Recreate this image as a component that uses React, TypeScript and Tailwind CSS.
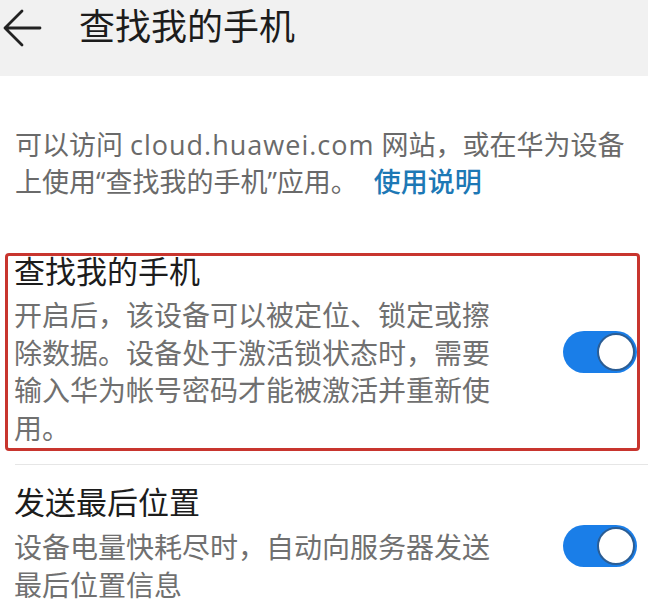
import React from "react";

const font = { fontFamily: '"Open Sans", "Noto Sans CJK SC", sans-serif' };

function Toggle() {
  return (
    <div className="w-[74px] h-[42px] rounded-full bg-[#1a7ee8] flex items-center justify-end p-[2px] shrink-0">
      <div className="w-[38px] h-[38px] rounded-full bg-white border-[2.5px] border-[#2b5d94]" />
    </div>
  );
}

export default function App() {
  return (
    <div className="w-[648px] h-[611px] bg-white overflow-hidden" style={font}>
      {/* header */}
      <div className="h-[76px] bg-[#f1f1f1] flex items-start pt-[7px] pl-[2px]">
        <svg width="40" height="38" viewBox="0 0 40 38" className="mt-[2px]" fill="none">
          <path
            d="M38 19 H3 M20 2 L3 19 L20 36"
            stroke="#222"
            strokeWidth="2.8"
            strokeLinecap="round"
            strokeLinejoin="round"
          />
        </svg>
        <h1 className="ml-[37px] text-[36px] leading-[40px] text-[#1c1c1c]">查找我的手机</h1>
      </div>

      {/* intro */}
      <p className="mt-[50px] pl-[15px] pr-[20px] text-[27px] leading-[37px] text-[#6a6a6a]">
        可以访问 <span className="tracking-[1px]">cloud.huawei.com</span> 网站，或在华为设备上使用“查找我的手机”应用。
        <span className="ml-[16px] text-[#1d78b5] font-medium">使用说明</span>
      </p>

      {/* highlighted item */}
      <div className="mt-[53px] ml-[5px] mr-[8px] border-[3px] border-[#c8352e] rounded-[4px] flex items-center pl-[6px] pb-[1px]">
        <div className="w-[490px]">
          <div className="text-[31px] leading-[30px] text-[#1c1c1c]">查找我的手机</div>
          <div className="mt-[11px] text-[28px] leading-[37.5px] text-[#707070]">
            开启后，该设备可以被定位、锁定或擦除数据。设备处于激活锁状态时，需要输入华为帐号密码才能被激活并重新使用。
          </div>
        </div>
        <div className="ml-auto">
          <Toggle />
        </div>
      </div>

      {/* divider */}
      <div className="mt-[13px] ml-[15px] h-px bg-[#e6e6e6]" />

      {/* second item */}
      <div className="flex items-center pl-[14px] pr-[11px] pt-[22px]">
        <div className="w-[490px]">
          <div className="text-[31px] leading-[30px] text-[#1c1c1c]">发送最后位置</div>
          <div className="mt-[12px] text-[28px] leading-[37.5px] text-[#707070]">
            设备电量快耗尽时，自动向服务器发送最后位置信息
          </div>
        </div>
        <div className="ml-auto">
          <Toggle />
        </div>
      </div>
    </div>
  );
}
